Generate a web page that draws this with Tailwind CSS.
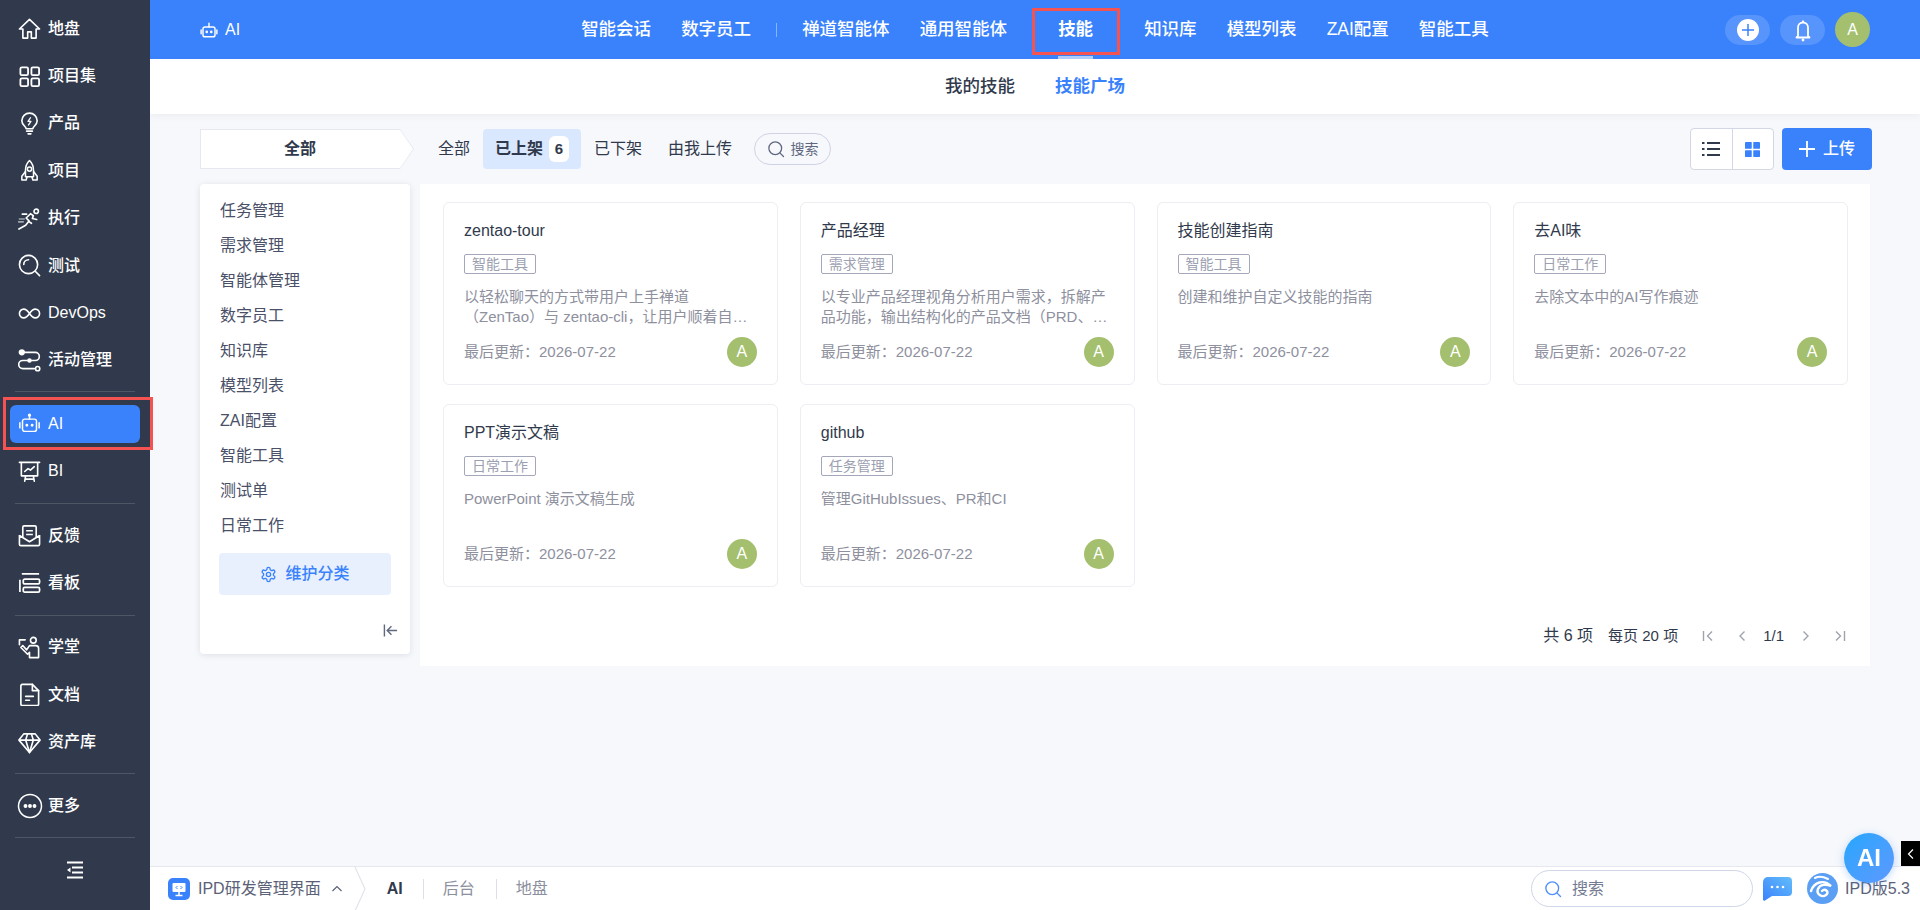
<!DOCTYPE html>
<html lang="zh">
<head>
<meta charset="utf-8">
<title>AI 技能广场</title>
<script src="https://cdn.jsdelivr.net/npm/@tailwindcss/browser@4"></script>
</head>
<body class="h-[910px] w-[1920px] overflow-hidden bg-[#f6f8fb] font-['Liberation_Sans','Noto_Sans_CJK_SC',sans-serif] text-[16px] text-[#313a4c]">
<div class="flex h-[910px] w-[1920px]">

<!-- Sidebar -->
<aside class="relative z-10 flex w-[150px] shrink-0 flex-col bg-[#313a4c] pt-[5px] text-[16px] font-medium text-white">
  <a class="flex h-[47.4px] items-center gap-[7px] pl-[18px]"><svg class="size-[23px]" viewBox="0 0 24 24" fill="none" stroke="currentColor" stroke-width="1.700" stroke-linejoin="round"><path d="M12 2.500 1.500 12.500h3.600V22h5v-6.500h3.800V22h5v-9.500h3.600z"/></svg>地盘</a>
  <a class="flex h-[47.4px] items-center gap-[7px] pl-[18px]"><svg class="size-[23px]" viewBox="0 0 24 24" fill="none" stroke="currentColor" stroke-width="1.900"><rect x="2.500" y="2.500" width="8" height="8" rx="1.500"/><rect x="14" y="2.500" width="8" height="8" rx="1.500"/><rect x="2.500" y="14" width="8" height="8" rx="1.500"/><rect x="14" y="14" width="8" height="8" rx="1.500"/></svg>项目集</a>
  <a class="flex h-[47.4px] items-center gap-[7px] pl-[18px]"><svg class="size-[23px]" viewBox="0 0 24 24" fill="none" stroke="currentColor" stroke-width="1.700" stroke-linejoin="round" stroke-linecap="round"><path d="M8.500 17.500c0-2.500-4.500-3.800-4.500-8.300a8 8 0 0 1 16 0c0 4.500-4.500 5.800-4.500 8.300z"/><path d="M9 20h6M10.500 22.800h3"/><path d="M13 6l-2.500 3.800h3L11 13.500" stroke-width="1.400"/></svg>产品</a>
  <a class="flex h-[47.4px] items-center gap-[7px] pl-[18px]"><svg class="size-[23px]" viewBox="0 0 24 24" fill="none" stroke="currentColor" stroke-width="1.600" stroke-linejoin="round"><path d="M12 1.500c3.200 3 4.200 6.500 4.200 10.500v6.500H7.800V12c0-4 1-7.500 4.200-10.500z"/><circle cx="12" cy="10.500" r="2.200"/><path d="M7.800 13 4 18v4h4.500l1-3.500M16.200 13 20 18v4h-4.500l-1-3.500"/></svg>项目</a>
  <a class="flex h-[47.4px] items-center gap-[7px] pl-[18px]"><svg class="size-[23px]" viewBox="0 0 24 24" fill="none" stroke="currentColor" stroke-width="1.700" stroke-linecap="round" stroke-linejoin="round"><circle cx="19" cy="4.500" r="2.300"/><path d="M1 23l7-4 3.500-4.500-3-3 4.500-4.500 3 2-1 3 4.500 1M11 15l3 2M9 7.500H4.500"/><path d="M1.500 12.500h5M.5 15.500h5" stroke-opacity=".55"/></svg>执行</a>
  <a class="flex h-[47.4px] items-center gap-[7px] pl-[18px]"><svg class="size-[23px]" viewBox="0 0 24 24" fill="none" stroke="currentColor" stroke-width="1.700" stroke-linecap="round"><circle cx="11" cy="11" r="9.500"/><path d="M18 18l4.500 4.500M6 11a5 5 0 0 1 5-5"/></svg>测试</a>
  <a class="flex h-[47.4px] items-center gap-[7px] pl-[18px] font-normal"><svg class="size-[23px]" viewBox="0 0 24 24" fill="none" stroke="currentColor" stroke-width="1.700"><path d="M12 12c-2-3-3.800-4.500-6-4.500a4.500 4.500 0 0 0 0 9c2.200 0 4-1.500 6-4.500s3.800-4.500 6-4.500a4.500 4.500 0 0 1 0 9c-2.200 0-4-1.500-6-4.500z"/></svg>DevOps</a>
  <a class="flex h-[47.4px] items-center gap-[7px] pl-[18px]"><svg class="size-[23px]" viewBox="0 0 24 24" fill="none" stroke="currentColor" stroke-width="1.700" stroke-linecap="round"><circle cx="4" cy="3.500" r="2.500" fill="currentColor"/><path d="M7 3.500h11a4 4 0 0 1 0 8.500H5a4 4 0 0 0 0 8.500h12"/><circle cx="20.500" cy="20.500" r="2.200"/><circle cx="12" cy="12" r="1.500" fill="currentColor"/></svg>活动管理</a>
  <div class="mx-[15px] mb-[8px] mt-[7px] h-px bg-white/15"></div>
  <a class="relative flex h-[47.4px] items-center">
    <span class="ml-[10px] flex h-[38px] w-[130px] items-center gap-[8px] rounded-md bg-[#3a82fc] pl-[9px] font-normal"><svg class="size-[21px]" viewBox="0 0 24 24" fill="none" stroke="currentColor" stroke-width="1.700" stroke-linecap="round" stroke-linejoin="round"><rect x="4" y="7" width="16" height="14" rx="2.500"/><path d="M12 7V3.500M1 11v6M23 11v6"/><circle cx="12" cy="2.500" r="1" fill="currentColor"/><circle cx="9" cy="14" r=".8" fill="currentColor"/><circle cx="15" cy="14" r=".8" fill="currentColor"/></svg>AI</span>
    <span class="absolute left-[3px] top-[-3px] h-[53px] w-[150px] border-[3px] border-[#f55252]"></span>
  </a>
  <a class="flex h-[47.4px] items-center gap-[7px] pl-[18px] font-normal"><svg class="size-[23px]" viewBox="0 0 24 24" fill="none" stroke="currentColor" stroke-width="1.700" stroke-linecap="round" stroke-linejoin="round"><path d="M1.500 2.500h21M3.500 2.500v14h17v-14M8 16.500 7 22M16 16.500l1 5.500M7.500 20h9"/><path d="M7 12l3.500-3 2.500 1.500L17 7"/></svg>BI</a>
  <div class="mx-[15px] my-[8px] h-px bg-white/15"></div>
  <a class="flex h-[47.4px] items-center gap-[7px] pl-[18px]"><svg class="size-[23px]" viewBox="0 0 24 24" fill="none" stroke="currentColor" stroke-width="1.700" stroke-linejoin="round"><path d="M1.500 11.500V21a1.500 1.500 0 0 0 1.500 1.500h18a1.500 1.500 0 0 0 1.500-1.500v-9.500M1.500 12l10.500 6.500L22.500 12"/><path d="M5 14V3.500A1.500 1.500 0 0 1 6.500 2h11A1.500 1.500 0 0 1 19 3.500V14M8.500 7h7M8.500 11h7"/></svg>反馈</a>
  <a class="flex h-[47.4px] items-center gap-[7px] pl-[18px]"><svg class="size-[23px]" viewBox="0 0 24 24" fill="none" stroke="currentColor" stroke-width="1.800"><path d="M4 3h18M2 9v13"/><rect x="5.500" y="8.500" width="17" height="5" rx="1.500"/><rect x="5.500" y="17" width="17" height="5" rx="1.500"/></svg>看板</a>
  <div class="mx-[15px] my-[8px] h-px bg-white/15"></div>
  <a class="flex h-[47.4px] items-center gap-[7px] pl-[18px]"><svg class="size-[23px]" viewBox="0 0 24 24" fill="none" stroke="currentColor" stroke-width="1.700" stroke-linecap="round" stroke-linejoin="round"><circle cx="16" cy="4.500" r="3"/><path d="M1.500 4h6M1.500 4v5M3 12l7 7 2-2 0 5.500h9.500V13a3 3 0 0 0-3-3H12l-3 4.500L5 10z"/></svg>学堂</a>
  <a class="flex h-[47.4px] items-center gap-[7px] pl-[18px]"><svg class="size-[23px]" viewBox="0 0 24 24" fill="none" stroke="currentColor" stroke-width="1.700" stroke-linecap="round" stroke-linejoin="round"><path d="M3 3a1.500 1.500 0 0 1 1.500-1.500H15l6.500 6.500v14a1.500 1.500 0 0 1-1.500 1.500H4.500A1.500 1.500 0 0 1 3 22z"/><path d="M15 1.500V8h6.500M8 14h8M8 18h4"/></svg>文档</a>
  <a class="flex h-[47.4px] items-center gap-[7px] pl-[18px]"><svg class="size-[23px]" viewBox="0 0 24 24" fill="none" stroke="currentColor" stroke-width="1.700" stroke-linejoin="round"><path d="M6 3h12l5 6.500L12 22.500 1 9.500z"/><path d="M1 9.500h22M8 9.500 12 22.500l4-13M8 9.500 10 3M16 9.500 14 3"/></svg>资产库</a>
  <div class="mx-[15px] mb-[8px] mt-[7px] h-px bg-white/15"></div>
  <a class="flex h-[47.4px] items-center gap-[5px] pl-[17px]"><svg class="size-[26px]" viewBox="0 0 26 26" fill="none" stroke="currentColor" stroke-width="1.500"><circle cx="13" cy="13" r="11.500"/><circle cx="8.500" cy="13" r="1.200" fill="currentColor"/><circle cx="13" cy="13" r="1.200" fill="currentColor"/><circle cx="17.500" cy="13" r="1.200" fill="currentColor"/></svg>更多</a>
  <div class="mx-[15px] my-[8px] h-px bg-white/15"></div>
  <a class="flex h-[47.4px] items-center justify-center"><svg class="ml-[-1px] size-[18px]" viewBox="0 0 18 18" fill="none" stroke="currentColor" stroke-width="2"><path d="M1 1.500h16M6 6.500h11M6 11.500h11M1 16.500h16"/><path d="M4.500 6.500v5L1 9z" fill="currentColor" stroke="none"/></svg></a>
</aside>

<!-- Main -->
<div class="flex min-w-0 flex-1 flex-col">
  <!-- Top bar -->
  <header class="grid h-[59px] shrink-0 grid-cols-[1fr_auto_1fr] items-center bg-[#3a82fc] text-white">
    <div class="flex items-center gap-[7px] pl-[50px] text-[16px]">
      <svg class="size-[18px]" viewBox="0 0 24 24" fill="none" stroke="currentColor" stroke-width="1.900" stroke-linecap="round" stroke-linejoin="round"><rect x="4" y="8" width="16" height="13" rx="2.500"/><path d="M12 8V3M1.500 12v5M22.500 12v5"/><circle cx="9" cy="14.500" r=".8" fill="currentColor"/><circle cx="15" cy="14.500" r=".8" fill="currentColor"/></svg>AI
    </div>
    <nav class="flex items-center gap-[30px] text-[17.5px] font-medium">
      <a>智能会话</a>
      <a>数字员工</a>
      <span class="mx-[-5px] h-[14px] w-px bg-white/40"></span>
      <a>禅道智能体</a>
      <a>通用智能体</a>
      <a class="relative px-[21px] font-bold">技能
        <span class="absolute left-[-5px] top-[-8px] h-[47px] w-[88px] border-[3px] border-[#f55252]"></span>
        <span class="absolute bottom-[-16px] left-[21px] h-[3px] w-[35px] bg-white/60"></span>
      </a>
      <a>知识库</a>
      <a>模型列表</a>
      <a>ZAI配置</a>
      <a>智能工具</a>
    </nav>
    <div class="flex items-center justify-end gap-[10px] pr-[50px]">
      <button class="flex h-[30px] w-[45px] items-center justify-center rounded-full bg-white/15">
        <svg class="size-[22px]" viewBox="0 0 22 22"><circle cx="11" cy="11" r="11" fill="#fff"/><path d="M11 5v12M5 11h12" stroke="#3a82fc" stroke-width="1.500"/></svg>
      </button>
      <button class="flex h-[30px] w-[45px] items-center justify-center rounded-full bg-white/15">
        <svg class="size-[24px]" viewBox="0 0 24 24" fill="none" stroke="#fff" stroke-width="1.800" stroke-linejoin="round"><path d="M7 18V9.500a5 5 0 0 1 10 0V18l1.500 1.500h-13z"/><circle cx="12" cy="22" r="1.400" fill="#fff" stroke="none"/><path d="M12 2.500v2"/></svg>
      </button>
      <span class="flex size-[35px] items-center justify-center rounded-full bg-[#a4bf6e] text-[16px]">A</span>
    </div>
  </header>

  <!-- Sub bar -->
  <div class="flex h-[55px] shrink-0 items-center justify-center gap-[40px] bg-white text-[17.5px] font-medium text-[#313a4c] shadow-[0_2px_8px_rgba(0,0,0,0.05)]">
    <a>我的技能</a>
    <a class="font-bold text-[#3a82fc]">技能广场</a>
  </div>

  <!-- Filter row -->
  <div class="mt-[15px] flex h-[40px] shrink-0 items-center pl-[50px] pr-[48px]">
    <div class="h-[40px] w-[214px] bg-[#e6e8f1] p-px [clip-path:polygon(0_0,200px_0,214px_50%,200px_100%,0_100%)]">
      <div class="flex h-[38px] w-[212px] items-center justify-center bg-white pr-[14px] text-[16px] font-bold text-[#313a4c] [clip-path:polygon(0_0,199px_0,212px_50%,199px_100%,0_100%)]">全部</div>
    </div>
    <a class="ml-[24px] text-[16px]">全部</a>
    <a class="ml-[13px] flex h-[40px] w-[98px] items-center justify-center gap-[6px] rounded-sm bg-[#d9e8fe] text-[16px] font-bold">已上架<span class="flex h-[26px] w-[20px] items-center justify-center rounded-md bg-white text-[15px] font-bold">6</span></a>
    <a class="ml-[13px] text-[16px]">已下架</a>
    <a class="ml-[26px] text-[16px]">由我上传</a>
    <div class="ml-[22px] flex h-[32px] w-[77px] items-center justify-center gap-[6px] rounded-full border border-[#cfd3e3] text-[14px] text-[#5f6880]">
      <svg class="size-[18px]" viewBox="0 0 24 24" fill="none" stroke="currentColor" stroke-width="1.700" stroke-linecap="round"><circle cx="11" cy="11" r="8.500"/><path d="M17.500 17.500 22 22"/></svg>搜索
    </div>
    <div class="ml-auto flex h-[42px] w-[84px] rounded-sm border border-[#d3d7e6] bg-white">
      <button class="flex flex-1 items-center justify-center border-r border-[#d3d7e6]">
        <svg class="size-[20px]" viewBox="0 0 20 20" fill="none" stroke="#313a4c" stroke-width="2"><path d="M6 4h13M6 10h13M6 16h13M1 4h2.500M1 10h2.500M1 16h2.500"/></svg>
      </button>
      <button class="flex flex-1 items-center justify-center">
        <svg class="size-[15px]" viewBox="0 0 16 16" fill="#3a82fc"><rect width="7.200" height="7.200" rx=".5"/><rect x="8.800" width="7.200" height="7.200" rx=".5"/><rect y="8.800" width="7.200" height="7.200" rx=".5"/><rect x="8.800" y="8.800" width="7.200" height="7.200" rx=".5"/></svg>
      </button>
    </div>
    <button class="ml-[8px] flex h-[42px] w-[90px] items-center justify-center gap-[8px] rounded-sm bg-[#3a82fc] text-[16px] font-medium text-white">
      <svg class="size-[16px]" viewBox="0 0 16 16" stroke="#fff" stroke-width="1.800"><path d="M8 0v16M0 8h16"/></svg>上传
    </button>
  </div>

  <!-- Body -->
  <div class="mt-[15px] flex shrink-0 items-start gap-[10px] pl-[50px] pr-[50px]">
    <!-- Category panel -->
    <div class="flex h-[470px] w-[210px] shrink-0 flex-col rounded-sm bg-white px-[19px] pt-[9px] text-[16px] text-[#4a5068] shadow-[0_1px_6px_rgba(40,50,90,0.12)]">
      <div class="flex h-[35px] items-center px-[1px]">任务管理</div>
      <div class="flex h-[35px] items-center px-[1px]">需求管理</div>
      <div class="flex h-[35px] items-center px-[1px]">智能体管理</div>
      <div class="flex h-[35px] items-center px-[1px]">数字员工</div>
      <div class="flex h-[35px] items-center px-[1px]">知识库</div>
      <div class="flex h-[35px] items-center px-[1px]">模型列表</div>
      <div class="flex h-[35px] items-center px-[1px]">ZAI配置</div>
      <div class="flex h-[35px] items-center px-[1px]">智能工具</div>
      <div class="flex h-[35px] items-center px-[1px]">测试单</div>
      <div class="flex h-[35px] items-center px-[1px]">日常工作</div>
      <button class="mt-[10px] flex h-[42px] w-[172px] items-center justify-center gap-[8px] rounded-sm bg-[#e8f0fe] text-[16px] font-medium text-[#3a82fc]">
        <svg class="size-[17px]" viewBox="0 0 24 24" fill="none" stroke="currentColor" stroke-width="1.900" stroke-linejoin="round"><path d="M12.220 2h-.44a2 2 0 0 0-2 2v.18a2 2 0 0 1-1 1.730l-.43.25a2 2 0 0 1-2 0l-.15-.08a2 2 0 0 0-2.730.73l-.22.38a2 2 0 0 0 .73 2.730l.15.1a2 2 0 0 1 1 1.720v.51a2 2 0 0 1-1 1.740l-.15.09a2 2 0 0 0-.73 2.730l.22.38a2 2 0 0 0 2.730.73l.15-.08a2 2 0 0 1 2 0l.43.25a2 2 0 0 1 1 1.730V20a2 2 0 0 0 2 2h.44a2 2 0 0 0 2-2v-.18a2 2 0 0 1 1-1.730l.43-.25a2 2 0 0 1 2 0l.15.08a2 2 0 0 0 2.730-.73l.22-.39a2 2 0 0 0-.73-2.730l-.15-.08a2 2 0 0 1-1-1.740v-.5a2 2 0 0 1 1-1.740l.15-.09a2 2 0 0 0 .73-2.730l-.22-.38a2 2 0 0 0-2.730-.73l-.15.08a2 2 0 0 1-2 0l-.43-.25a2 2 0 0 1-1-1.730V4a2 2 0 0 0-2-2z"/><circle cx="12" cy="12" r="3"/></svg>维护分类
      </button>
      <div class="mt-[28px] flex justify-end">
        <svg class="mr-[-7px] size-[15px]" viewBox="0 0 16 16" fill="none" stroke="#5f6880" stroke-width="1.500"><path d="M1.500 1.500v13M15 8H4.500M9 3.500 4.500 8 9 12.500"/></svg>
      </div>
    </div>

    <!-- Card panel -->
    <div class="flex h-[482px] min-w-0 flex-1 flex-col bg-white pl-[23px] pr-[22px] pt-[18px]">
      <div class="grid grid-cols-4 gap-x-[22px] gap-y-[19px]">

        <article class="flex h-[183px] flex-col rounded-md border border-[#eceef4] px-[20px] pt-[16px]">
          <h3 class="h-[24px] text-[16px] leading-[24px] font-normal">zentao-tour</h3>
          <span class="mt-[11px] flex h-[20px] w-[72px] items-center justify-center rounded-[2px] border border-[#a4a7ba] text-[14px] leading-[18px] text-[#9ca0b0]">智能工具</span>
          <p class="mt-[13px] line-clamp-2 h-[40px] text-[15px] leading-[20px] text-[#8e909e]">以轻松聊天的方式带用户上手禅道（ZenTao）与 zentao-cli，让用户顺着自然的对话完成第一次体验</p>
          <div class="mt-[10px] flex items-center justify-between text-[15px] text-[#8e909e]"><span>最后更新：2026-07-22</span><span class="flex size-[30px] items-center justify-center rounded-full bg-[#a4bf6e] text-[16px] text-white">A</span></div>
        </article>

        <article class="flex h-[183px] flex-col rounded-md border border-[#eceef4] px-[20px] pt-[16px]">
          <h3 class="h-[24px] text-[16px] leading-[24px] font-normal">产品经理</h3>
          <span class="mt-[11px] flex h-[20px] w-[72px] items-center justify-center rounded-[2px] border border-[#a4a7ba] text-[14px] leading-[18px] text-[#9ca0b0]">需求管理</span>
          <p class="mt-[13px] line-clamp-2 h-[40px] text-[15px] leading-[20px] text-[#8e909e]">以专业产品经理视角分析用户需求，拆解产品功能，输出结构化的产品文档（PRD、用户故事与验收标准）等内容</p>
          <div class="mt-[10px] flex items-center justify-between text-[15px] text-[#8e909e]"><span>最后更新：2026-07-22</span><span class="flex size-[30px] items-center justify-center rounded-full bg-[#a4bf6e] text-[16px] text-white">A</span></div>
        </article>

        <article class="flex h-[183px] flex-col rounded-md border border-[#eceef4] px-[20px] pt-[16px]">
          <h3 class="h-[24px] text-[16px] leading-[24px] font-normal">技能创建指南</h3>
          <span class="mt-[11px] flex h-[20px] w-[72px] items-center justify-center rounded-[2px] border border-[#a4a7ba] text-[14px] leading-[18px] text-[#9ca0b0]">智能工具</span>
          <p class="mt-[13px] line-clamp-2 h-[40px] text-[15px] leading-[20px] text-[#8e909e]">创建和维护自定义技能的指南</p>
          <div class="mt-[10px] flex items-center justify-between text-[15px] text-[#8e909e]"><span>最后更新：2026-07-22</span><span class="flex size-[30px] items-center justify-center rounded-full bg-[#a4bf6e] text-[16px] text-white">A</span></div>
        </article>

        <article class="flex h-[183px] flex-col rounded-md border border-[#eceef4] px-[20px] pt-[16px]">
          <h3 class="h-[24px] text-[16px] leading-[24px] font-normal">去AI味</h3>
          <span class="mt-[11px] flex h-[20px] w-[72px] items-center justify-center rounded-[2px] border border-[#a4a7ba] text-[14px] leading-[18px] text-[#9ca0b0]">日常工作</span>
          <p class="mt-[13px] line-clamp-2 h-[40px] text-[15px] leading-[20px] text-[#8e909e]">去除文本中的AI写作痕迹</p>
          <div class="mt-[10px] flex items-center justify-between text-[15px] text-[#8e909e]"><span>最后更新：2026-07-22</span><span class="flex size-[30px] items-center justify-center rounded-full bg-[#a4bf6e] text-[16px] text-white">A</span></div>
        </article>

        <article class="flex h-[183px] flex-col rounded-md border border-[#eceef4] px-[20px] pt-[16px]">
          <h3 class="h-[24px] text-[16px] leading-[24px] font-normal">PPT演示文稿</h3>
          <span class="mt-[11px] flex h-[20px] w-[72px] items-center justify-center rounded-[2px] border border-[#a4a7ba] text-[14px] leading-[18px] text-[#9ca0b0]">日常工作</span>
          <p class="mt-[13px] line-clamp-2 h-[40px] text-[15px] leading-[20px] text-[#8e909e]">PowerPoint 演示文稿生成</p>
          <div class="mt-[10px] flex items-center justify-between text-[15px] text-[#8e909e]"><span>最后更新：2026-07-22</span><span class="flex size-[30px] items-center justify-center rounded-full bg-[#a4bf6e] text-[16px] text-white">A</span></div>
        </article>

        <article class="flex h-[183px] flex-col rounded-md border border-[#eceef4] px-[20px] pt-[16px]">
          <h3 class="h-[24px] text-[16px] leading-[24px] font-normal">github</h3>
          <span class="mt-[11px] flex h-[20px] w-[72px] items-center justify-center rounded-[2px] border border-[#a4a7ba] text-[14px] leading-[18px] text-[#9ca0b0]">任务管理</span>
          <p class="mt-[13px] line-clamp-2 h-[40px] text-[15px] leading-[20px] text-[#8e909e]">管理GitHubIssues、PR和CI</p>
          <div class="mt-[10px] flex items-center justify-between text-[15px] text-[#8e909e]"><span>最后更新：2026-07-22</span><span class="flex size-[30px] items-center justify-center rounded-full bg-[#a4bf6e] text-[16px] text-white">A</span></div>
        </article>
      </div>

      <div class="mt-[37px] flex h-[24px] items-center justify-end pr-[2px] text-[15px]">
        <span class="text-[16px]">共 6 项</span>
        <span class="ml-[15px]">每页 20 项</span>
        <svg class="ml-[24px] size-[12px]" viewBox="0 0 12 12" fill="none" stroke="#a0a3ad" stroke-width="1.400"><path d="M1.500 1v10M10 1.500 5.500 6l4.500 4.500"/></svg>
        <svg class="ml-[22px] size-[12px]" viewBox="0 0 12 12" fill="none" stroke="#a0a3ad" stroke-width="1.400"><path d="M8.500 1.500 4 6l4.500 4.500"/></svg>
        <span class="ml-[15px]">1/1</span>
        <svg class="ml-[16px] size-[12px]" viewBox="0 0 12 12" fill="none" stroke="#a0a3ad" stroke-width="1.400"><path d="M3.500 1.500 8 6l-4.500 4.500"/></svg>
        <svg class="ml-[22px] size-[12px]" viewBox="0 0 12 12" fill="none" stroke="#a0a3ad" stroke-width="1.400"><path d="M10.500 1v10M2 1.500 6.500 6 2 10.500"/></svg>
      </div>
    </div>
  </div>

  <!-- Bottom bar -->
  <footer class="mt-auto flex h-[44px] shrink-0 items-center border-t border-[#e6e8f0] bg-white text-[16px]">
    <span class="ml-[18px] flex size-[22px] items-center justify-center rounded-[5px] bg-[#3a82fc]">
      <svg class="size-[16px]" viewBox="0 0 16 16" fill="none" stroke="#fff" stroke-width="1.500"><rect x="1.500" y="2" width="13" height="9" rx="1" fill="#fff" stroke="none"/><path d="M8 11v3M4.500 14.500h7"/><path d="M6.500 5 5 6.500 6.500 8M9.500 5 11 6.500 9.500 8" stroke="#3a82fc" stroke-width="1"/></svg>
    </span>
    <span class="ml-[8px] text-[#5b6277]">IPD研发管理界面</span>
    <svg class="ml-[11px] size-[10px]" viewBox="0 0 10 10" fill="none" stroke="#5b6277" stroke-width="1.200"><path d="M.5 7 5 2.500 9.500 7"/></svg>
    <svg class="ml-[12px] h-[44px] w-[12px]" viewBox="0 0 12 44" fill="none" stroke="#e2e4ec" stroke-width="1.200"><path d="M1 0l10 22L1 44"/></svg>
    <span class="ml-[21px] font-bold text-[#313a4c]">AI</span>
    <span class="ml-[20px] h-[20px] w-px bg-[#dcdfe7]"></span>
    <span class="ml-[19px] text-[#8b8f9e]">后台</span>
    <span class="ml-[21px] h-[20px] w-px bg-[#dcdfe7]"></span>
    <span class="ml-[19px] text-[#8b8f9e]">地盘</span>
    <div class="ml-auto flex h-[37px] w-[222px] items-center gap-[10px] rounded-full border border-[#cfd6e8] pl-[12px] text-[#737b92]">
      <svg class="size-[18px]" viewBox="0 0 24 24" fill="none" stroke="#4f8ffc" stroke-width="1.800" stroke-linecap="round"><circle cx="11" cy="11" r="8.500"/><path d="M17.500 17.500 22 22"/></svg>搜索
    </div>
    <svg class="ml-[10px] h-[24px] w-[29px]" viewBox="0 0 29 24"><defs><linearGradient id="chatg" x1="0" y1="1" x2="1" y2="0"><stop offset="0" stop-color="#3a82fc"/><stop offset="1" stop-color="#63bdfb"/></linearGradient></defs><path d="M5 0h20a4 4 0 0 1 4 4v11a4 4 0 0 1-4 4H9l-7 4.500a1.300 1.300 0 0 1-2-1V5a5 5 0 0 1 5-5z" fill="url(#chatg)"/><circle cx="9" cy="10" r="1.300" fill="#fff"/><circle cx="14.500" cy="10" r="1.300" fill="#fff"/><circle cx="20" cy="10" r="1.300" fill="#fff"/></svg>
    <svg class="ml-[15px] size-[31px]" viewBox="0 0 31 31" fill="none"><circle cx="15.500" cy="15.500" r="15.500" fill="#5b9ff5"/><path d="M4 18c3-9 13-12 20-5-5-2-11-2-13 3s4 9 8 6-1-7-4-4" stroke="#fff" stroke-width="2.400" stroke-linecap="round"/><path d="M8 5c4-2 9-1 13 1" stroke="#fff" stroke-width="2" stroke-linecap="round"/></svg>
    <span class="ml-[7px] mr-[10px] text-[#5b6277]">IPD版5.3</span>
  </footer>
</div>
</div>

<!-- Floating AI -->
<div class="fixed left-[1844px] top-[833px] z-20 flex size-[50px] items-center justify-center rounded-full bg-linear-to-br from-[#1ea7fd] to-[#5a98ff] text-[24px] font-bold text-white shadow-[0_2px_8px_rgba(58,130,252,0.3)]">AI</div>
<div class="fixed left-[1901px] top-[841px] z-20 flex h-[25px] w-[19px] items-center justify-center bg-black">
  <svg class="size-[12px]" viewBox="0 0 12 12" fill="none" stroke="#fff" stroke-width="1.200"><path d="M8 1.500 3.500 6 8 10.500"/></svg>
</div>
</body>
</html>
